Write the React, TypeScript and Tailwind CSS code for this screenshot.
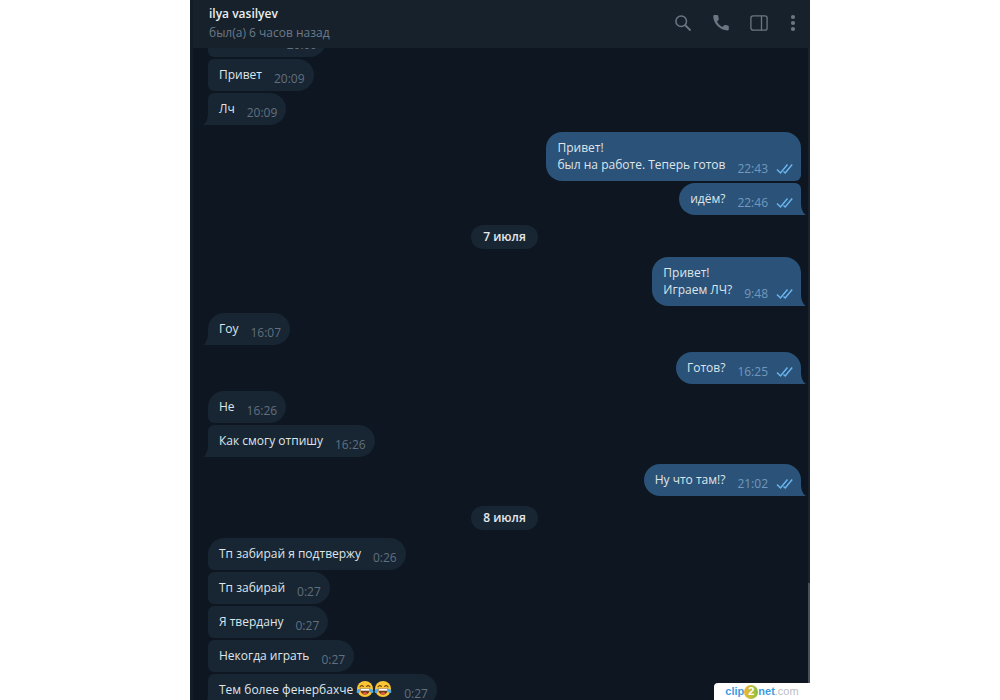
type Message = {
	text: string
	time: string
	out?: boolean
	first?: boolean
	last?: boolean
	laughs?: number
}

type Day = {
	date?: string
	groups: Message[][]
}

const days: Day[] = [
	{
		groups: [
			[
				{ text: 'Как дела?', time: '20:09' },
				{ text: 'Привет', time: '20:09' },
				{ text: 'Лч', time: '20:09' },
			],
			[
				{ text: 'Привет!\nбыл на работе. Теперь готов', time: '22:43', out: true },
				{ text: 'идём?', time: '22:46', out: true },
			],
		],
	},
	{
		date: '7 июля',
		groups: [
			[{ text: 'Привет!\nИграем ЛЧ?', time: '9:48', out: true }],
			[{ text: 'Гоу', time: '16:07' }],
			[{ text: 'Готов?', time: '16:25', out: true }],
			[
				{ text: 'Не', time: '16:26' },
				{ text: 'Как смогу отпишу', time: '16:26' },
			],
			[{ text: 'Ну что там!?', time: '21:02', out: true }],
		],
	},
	{
		date: '8 июля',
		groups: [
			[
				{ text: 'Тп забирай я подтвержу', time: '0:26' },
				{ text: 'Тп забирай', time: '0:27' },
				{ text: 'Я твердану', time: '0:27' },
				{ text: 'Некогда играть', time: '0:27' },
				{ text: 'Тем более фенербахче', time: '0:27', laughs: 2 },
			],
		],
	},
]

const Laugh = () => (
	<svg viewBox="0 0 18 18" className="size-[18px] shrink-0" role="img" aria-label="смех">
		<circle cx="9" cy="9" r="8" fill="#fbc535" />
		<path d="M4 6.800q1.600-2.200 3.400-.4M10.600 6.400q1.800-1.800 3.400.4" fill="none" stroke="#6b4213" strokeWidth="1.100" strokeLinecap="round" />
		<path d="M4.200 8.500h9.600c0 3.800-2 6.200-4.800 6.200S4.200 12.300 4.200 8.500z" fill="#6b3a16" />
		<path d="M4.600 8.700h8.800v2H4.600z" fill="#fff" />
		<path d="M6.300 13.300q2.700-2 5.400 0-2.700 2.200-5.400 0z" fill="#ef5b55" />
		<path d="M4.300 8.800C2.300 8.900.7 10 .6 11.500c0 1.400 1.500 2 2.400 1.200 1-.8 1.200-2.400 1.300-3.900zM13.700 8.800c2 .1 3.600 1.200 3.700 2.700 0 1.400-1.500 2-2.400 1.200-1-.8-1.200-2.400-1.300-3.900z" fill="#4da9ea" />
	</svg>
)

const Checks = () => (
	<svg viewBox="0 0 17 12" className="h-3 w-[17px]" fill="none" stroke="#68b5ee" strokeWidth="1.500" role="img" aria-label="прочитано">
		<path d="M1 6.500l3.500 3.500L11.500 1.500M7.500 8.500l1.700 1.500L16.200 1.500" />
	</svg>
)

const Tail = ({ out }: { out?: boolean }) => (
	<svg
		viewBox="0 0 5 12"
		className={out ? 'absolute bottom-0 left-full h-3 w-[5px] fill-[#2b5278]' : 'absolute right-full bottom-0 h-3 w-[5px] fill-[#182533]'}
	>
		<path d={out ? 'M0 0v12h5C2 10 0 6 0 0z' : 'M5 0v12H0c3-2 5-6 5-12z'} />
	</svg>
)

const Bubble = ({ text, time, out, first, last, laughs = 0 }: Message) => {
	let shape = out ? 'self-end rounded-l-2xl bg-[#2b5278] pr-2' : 'self-start rounded-r-2xl bg-[#182533] pr-[9px]'
	if (out) {
		shape += first ? ' rounded-tr-2xl' : ' rounded-tr-md'
		shape += last ? ' rounded-br-none' : ' rounded-br-md'
	} else {
		shape += first ? ' rounded-tl-2xl' : ' rounded-tl-md'
		shape += last ? ' rounded-bl-none' : ' rounded-bl-md'
	}

	return (
		<div className={`relative flex shrink-0 items-end gap-3 pt-[7px] pl-[11px] ${shape}`}>
			<p className="flex pb-2 text-xs leading-[17px] whitespace-pre-line text-[#dfe5ea]">
				{text}
				{laughs > 0 && (
					<span className="-my-px ml-[3px] flex">
						{Array.from({ length: laughs }, (_, i) => (
							<Laugh key={i} />
						))}
					</span>
				)}
			</p>
			<div className={`flex items-center gap-2 pb-1 text-xs ${out ? 'text-[#7299bd]' : 'text-[#61707e]'}`}>
				<span>{time}</span>
				{out && <Checks />}
			</div>
			{last && <Tail out={out} />}
		</div>
	)
}

const iconButton = 'flex size-5 items-center justify-center'

const Header = () => (
	<header className="z-10 flex h-12 shrink-0 items-center justify-between bg-[#17212b] pr-[7px] pb-0.5 pl-4">
		<div className="pb-px">
			<h1 className="text-xs leading-5 font-semibold text-[#e9eef2]">ilya vasilyev</h1>
			<p className="text-xs leading-[18px] text-[#6b7b8a]">был(а) 6 часов назад</p>
		</div>
		<div className="flex items-center text-[#6a7783]">
			<div className="flex items-center gap-[18px]">
				<button className={iconButton} aria-label="Поиск">
					<svg viewBox="0 0 18 18" className="size-[18px]" fill="none" stroke="currentColor" strokeWidth="1.500">
						<circle cx="7.200" cy="7.200" r="5.300" />
						<path d="M11 11l5.500 5.500" strokeWidth="1.800" />
					</svg>
				</button>
				<button className={iconButton} aria-label="Позвонить">
					<svg viewBox="0 0 18 18" className="size-[18px]" fill="currentColor">
						<path d="M1.300 2.300C1.300 1.600 1.800 1.100 2.500 1.100h2.600c.6 0 1 .4 1.100 1 .1 1 .3 1.900.6 2.700.1.400 0 .8-.3 1.100L5 7.400c1.200 2.400 3.100 4.300 5.500 5.500l1.600-1.600c.3-.3.7-.4 1.100-.3.900.3 1.700.500 2.600.6.600.1 1 .5 1 1.100v2.500c0 .7-.5 1.200-1.200 1.200C8 16.400 1.300 9.700 1.300 2.300z" />
					</svg>
				</button>
				<button className={iconButton} aria-label="Боковая панель">
					<svg viewBox="0 0 18 18" className="size-[18px]" fill="none" stroke="currentColor" strokeWidth="1.300">
						<rect x=".9" y="1.800" width="16.200" height="14.400" rx="2.200" />
						<path d="M11.500 1.800v14.400" />
					</svg>
				</button>
			</div>
			<button className="ml-3.5 flex size-5 items-center justify-center" aria-label="Меню">
				<svg viewBox="0 0 6 18" className="h-[18px] w-1.5" fill="currentColor">
					<circle cx="3" cy="3" r="2.100" />
					<circle cx="3" cy="9" r="2.100" />
					<circle cx="3" cy="15" r="2.100" />
				</svg>
			</button>
		</div>
	</header>
)

const Watermark = () => (
	<div className="absolute right-0 bottom-0 z-20 flex h-[17px] w-24 items-center justify-center rounded-tl bg-white font-['Liberation_Sans',sans-serif] text-[11px] text-[#3f9be0]">
		<span className="font-bold">clip</span>
		<span className="flex size-3.5 items-center justify-center rounded-full bg-linear-to-r from-[#f5b52b] to-[#7dc242] font-bold text-white">2</span>
		<span className="font-bold">net</span>
		<span className="text-[#b9bec6]">.com</span>
	</div>
)

const App = () => {
	return (
		<div className="h-screen bg-white font-['Open_Sans','Noto_Sans',sans-serif]">
			<main className="relative mx-auto flex h-full w-[62%] flex-col overflow-hidden border-l-[3px] border-[#131d27] bg-[#0e1621]">
				<Header />
				<div className="flex min-h-0 flex-1 overflow-hidden">
					<div className="-mt-[23px] flex flex-1 flex-col pr-[7px] pl-[15px]">
						{days.map((day, d) => (
							<section key={d} className="flex shrink-0 flex-col">
								{day.date && (
									<h2 className="mt-2.5 mb-2 flex h-6 items-center self-center rounded-full bg-[#182533] px-3 text-xs font-semibold text-[#e4e9ed]">
										{day.date}
									</h2>
								)}
								<div className="flex flex-col gap-[7px]">
									{day.groups.map((group, g) => (
										<div key={g} className="flex flex-col gap-0.5">
											{group.map((message, i) => (
												<Bubble key={i} {...message} first={i === 0} last={i === group.length - 1} />
											))}
										</div>
									))}
								</div>
							</section>
						))}
					</div>
					<div className="flex w-0.5 flex-col justify-end bg-[#1b242e]">
						<div className="h-[18%] bg-[#48525c]" />
					</div>
				</div>
				<Watermark />
			</main>
		</div>
	)
}

export default App
